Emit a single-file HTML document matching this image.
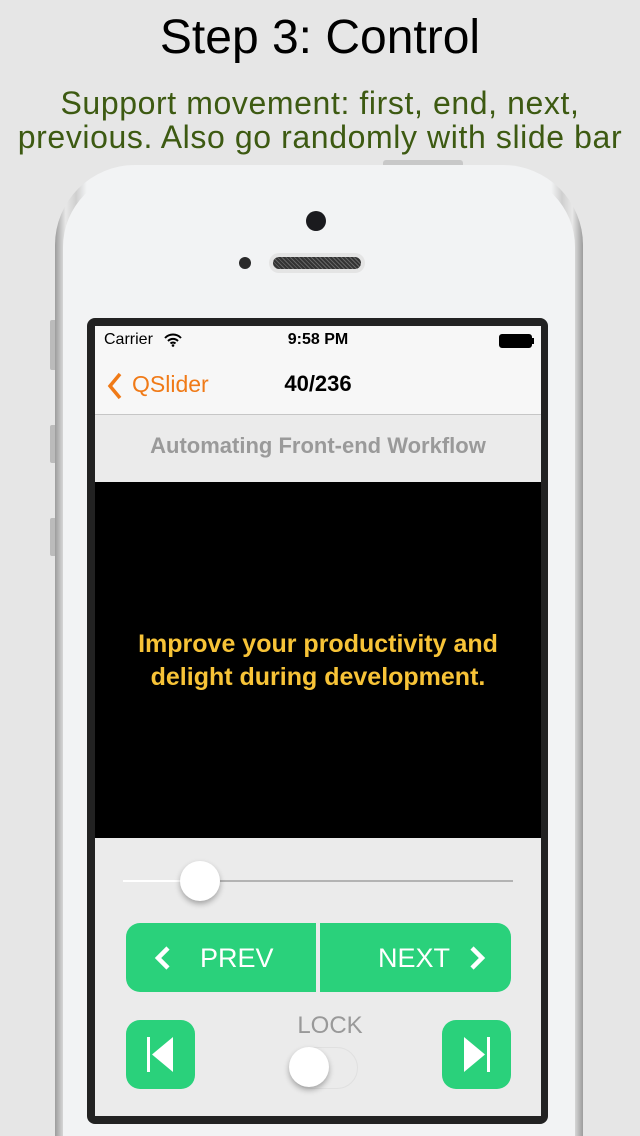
<!DOCTYPE html>
<html><head><meta charset="utf-8"><style>
*{margin:0;padding:0;box-sizing:border-box}
html{width:640px;height:1136px;overflow:hidden}
body{width:640px;height:1136px;background:#e6e6e6;position:relative;overflow:hidden;font-family:"Liberation Sans",sans-serif}
.abs{position:absolute}
h1{position:absolute;top:10px;left:0;width:640px;text-align:center;font-weight:normal;font-size:48px;color:#000;letter-spacing:0}
.sub{position:absolute;top:86px;left:0;width:640px;text-align:center;font-size:32px;line-height:34px;color:#3d5a12;letter-spacing:0.6px;white-space:nowrap}
.phone{left:55px;top:165px;width:528px;height:971px;border-radius:80px 80px 0 0;background:linear-gradient(90deg,#9c9c9c,#e8e8e8 2%,#cfcfcf 4%,#f2f3f4 6%,#f2f3f4 94%,#cfcfcf 96%,#e8e8e8 98%,#9c9c9c)}
.phone:after{content:"";position:absolute;left:8px;top:8px;right:8px;bottom:0;border-radius:74px 74px 0 0;background:#f2f3f4}
.btn{background:#2ad17b;border-radius:14px}
</style></head><body>
<h1>Step 3: Control</h1>
<div class="sub">Support movement: first, end, next,<br>previous. Also go randomly with slide bar</div>
<div class="abs" style="left:383px;top:160px;width:80px;height:8px;background:#c8c8c8;border-radius:3px"></div>
<div class="abs" style="left:50px;top:320px;width:7px;height:50px;background:#bbb;border-radius:2px"></div>
<div class="abs" style="left:50px;top:425px;width:7px;height:38px;background:#bbb;border-radius:2px"></div>
<div class="abs" style="left:50px;top:518px;width:7px;height:38px;background:#bbb;border-radius:2px"></div>
<div class="abs phone"></div>
<div class="abs" style="left:306px;top:211px;width:20px;height:20px;border-radius:50%;background:#1a1a1e"></div>
<div class="abs" style="left:239px;top:257px;width:12px;height:12px;border-radius:50%;background:#2a2a2a"></div>
<div class="abs" style="left:269px;top:253px;width:96px;height:20px;border-radius:10px;background:#e4e4e4"></div>
<div class="abs" style="left:273px;top:257px;width:88px;height:12px;border-radius:6px;background:repeating-linear-gradient(45deg,#333 0 2px,#666 2px 3px)"></div>
<div class="abs" style="left:87px;top:318px;width:461px;height:806px;background:#222;border-radius:8px"></div>
<div class="abs" style="left:95px;top:326px;width:446px;height:790px;background:#ebebeb;overflow:hidden">
 <div class="abs" style="left:0;top:0;width:446px;height:89px;background:#f7f7f7;border-bottom:1px solid #c6c6c6"></div>
 <div class="abs" style="left:9px;top:5px;font-size:16px">Carrier</div>
 <svg class="abs" style="left:69px;top:7px" width="18" height="14" viewBox="0 0 18 14"><path d="M1 5a11 11 0 0 1 16 0M4 8a7 7 0 0 1 10 0M6.5 10.5a3.5 3.5 0 0 1 5 0" stroke="#000" stroke-width="2" fill="none"/><circle cx="9" cy="12.5" r="1.3"/></svg>
 <div class="abs" style="left:0;width:446px;top:5px;text-align:center;font-size:16px;font-weight:bold">9:58 PM</div>
 <div class="abs" style="left:404px;top:8px;width:33px;height:14px;border:1px solid #000;border-radius:3px;background:#000"></div>
 <div class="abs" style="left:437px;top:12px;width:2px;height:6px;background:#000"></div>
 <svg class="abs" style="left:12px;top:46px" width="16" height="28" viewBox="0 0 16 28"><path d="M13 2L3 14l10 12" stroke="#f07a17" stroke-width="3.5" fill="none"/></svg>
 <div class="abs" style="left:37px;top:45px;font-size:23px;color:#f07a17">QSlider</div>
 <div class="abs" style="left:0;width:446px;top:45px;text-align:center;font-size:22px;font-weight:bold">40/236</div>
 <div class="abs" style="left:0;width:446px;top:107px;text-align:center;font-size:22px;font-weight:bold;color:#9a9a9a">Automating Front-end Workflow</div>
 <div class="abs" style="left:0;top:156px;width:446px;height:356px;background:#000"></div>
 <div class="abs" style="left:0;width:446px;top:302px;text-align:center;font-size:25px;line-height:33px;font-weight:bold;color:#f7c337">Improve your productivity and<br>delight during development.</div>
 <div class="abs" style="left:28px;top:554px;width:80px;height:2px;background:#fff"></div>
 <div class="abs" style="left:105px;top:554px;width:313px;height:2px;background:#b3b3b3"></div>
 <div class="abs" style="left:85px;top:535px;width:40px;height:40px;border-radius:50%;background:#fff;box-shadow:0 3px 6px rgba(0,0,0,.3)"></div>
 <div class="abs btn" style="left:31px;top:597px;width:385px;height:69px"></div>
 <div class="abs" style="left:221px;top:597px;width:4px;height:69px;background:#ebebeb"></div>
 <svg class="abs" style="left:58px;top:619px" width="20" height="26"><path d="M15 3L5 13l10 10" stroke="#fff" stroke-width="4.5" fill="none"/></svg>
 <div class="abs" style="left:105px;top:617px;font-size:27px;color:#fff">PREV</div>
 <div class="abs" style="left:283px;top:617px;font-size:27px;color:#fff">NEXT</div>
 <svg class="abs" style="left:372px;top:619px" width="20" height="26"><path d="M5 3l10 10L5 23" stroke="#fff" stroke-width="4.5" fill="none"/></svg>
 <div class="abs btn" style="left:31px;top:694px;width:69px;height:69px"></div>
 <svg class="abs" style="left:31px;top:694px" width="69" height="69"><rect x="21" y="17" width="3" height="35" fill="#fff"/><path d="M26 34.5L47 17v35z" fill="#fff"/></svg>
 <div class="abs btn" style="left:347px;top:694px;width:69px;height:69px"></div>
 <svg class="abs" style="left:347px;top:694px" width="69" height="69"><rect x="45" y="17" width="3" height="35" fill="#fff"/><path d="M43 34.5L22 17v35z" fill="#fff"/></svg>
 <div class="abs" style="left:165px;width:140px;top:686px;text-align:center;font-size:24px;color:#999">LOCK</div>
 <div class="abs" style="left:195px;top:721px;width:68px;height:42px;border-radius:21px;border:1px solid #e0e0e0"></div>
 <div class="abs" style="left:194px;top:721px;width:40px;height:40px;border-radius:50%;background:#fff;box-shadow:0 3px 6px rgba(0,0,0,.3)"></div>
</div>
</body></html>
